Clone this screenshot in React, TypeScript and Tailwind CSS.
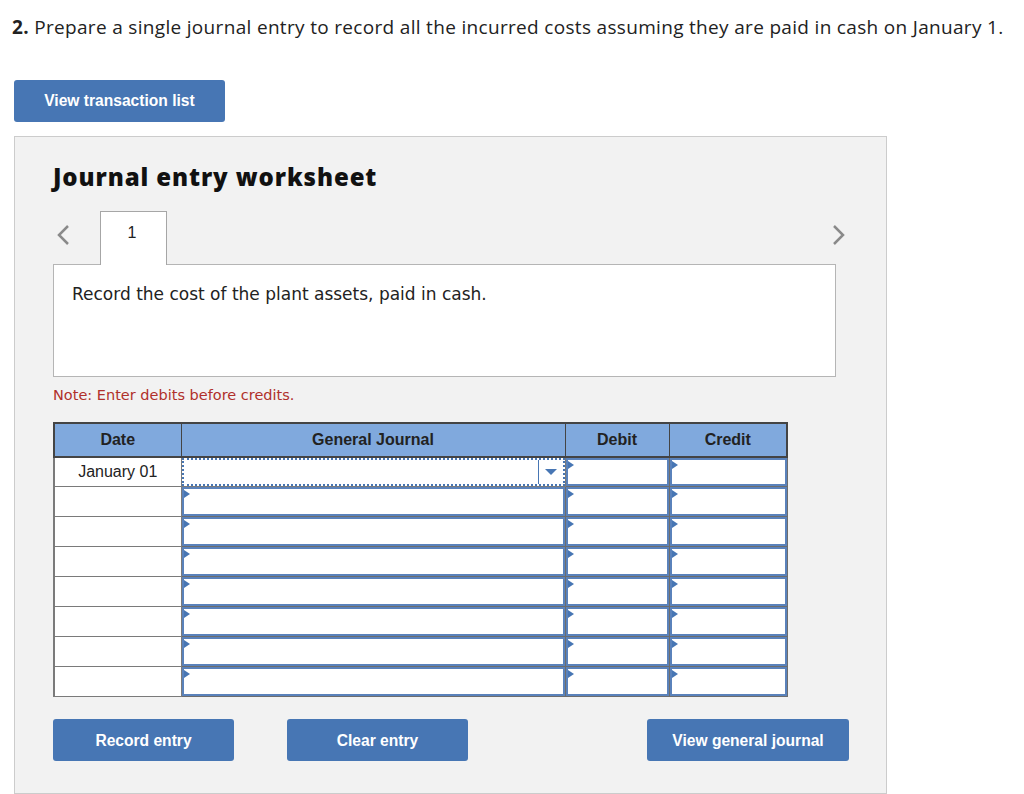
import React from 'react';

const blue = 'bg-[#4776b4]';

function Tri() {
  return (
    <span className="absolute left-0 top-[1px] w-0 h-0 border-y-[4px] border-y-transparent border-l-[6px] border-l-[#4776b4]" />
  );
}

function InputCell({ w }: { w: string }) {
  return (
    <td className={`${w} h-[30px] p-0 border border-[#6d6d6d] bg-white`}>
      <div className="relative h-full border-2 border-[#5a82bb]">
        <Tri />
      </div>
    </td>
  );
}

export default function App() {
  const rows = [0, 1, 2, 3, 4, 5, 6, 7];
  return (
    <div className="w-[1024px] h-[794px] bg-white text-[#222] overflow-hidden">
      <p className="pl-[12px] pt-[14px] text-[19px] leading-[26px] tracking-[0.32px] font-['Open_Sans',sans-serif] text-[#222] whitespace-nowrap">
        <b>2.</b> Prepare a single journal entry to record all the incurred costs assuming they are paid in cash on January 1.
      </p>

      <button
        className={`ml-[14px] mt-[40px] w-[211px] h-[42px] rounded-[3px] ${blue} text-white text-[15.6px] font-bold font-['Liberation_Sans',sans-serif]`}
      >
        View transaction list
      </button>

      <div className="ml-[14px] mt-[14px] w-[873px] h-[658px] bg-[#f2f2f2] border border-[#cccccc] pl-[38px] pr-[50px] pt-[24px]">
        <h2 className="text-[24px] leading-[32px] tracking-[0.9px] font-extrabold font-['Open_Sans',sans-serif] text-[#111]">
          Journal entry worksheet
        </h2>

        <div className="mt-[17px] flex items-end h-[54px] relative">
          <span className="w-[47px] pl-[3px] pb-[18px]">
            <svg width="14" height="22" viewBox="0 0 14 22">
              <path d="M12 2 L3 11 L12 20" fill="none" stroke="#8a8a8a" strokeWidth="2.5" />
            </svg>
          </span>
          <div className="w-[67px] h-[54px] bg-white border border-b-0 border-[#a6a6a6] flex justify-center pt-[9px] pr-[3px] text-[16px] font-['Liberation_Sans',sans-serif] relative z-10 -mb-[1px]">
            1
          </div>
          <span className="ml-auto mr-[-10px] pb-[18px]">
            <svg width="14" height="22" viewBox="0 0 14 22">
              <path d="M2 2 L11 11 L2 20" fill="none" stroke="#8a8a8a" strokeWidth="2.5" />
            </svg>
          </span>
        </div>

        <div className="w-[783px] h-[113px] bg-white border border-[#b5b5b5] pl-[18px] pt-[17px] text-[17px] font-['DejaVu_Sans',sans-serif] text-[#222]">
          Record the cost of the plant assets, paid in cash.
        </div>

        <p className="mt-[8px] text-[14.5px] font-['DejaVu_Sans',sans-serif] text-[#b0302b]">
          Note: Enter debits before credits.
        </p>

        <table className="mt-[15px] border-collapse table-fixed w-[735px] font-['Liberation_Sans',sans-serif]">
          <thead>
            <tr className="h-[34px] bg-[#80a9dd] text-[16px] font-bold text-[#222]">
              <th className="w-[127px] border-2 border-[#444] border-r-[1px]">Date</th>
              <th className="w-[384px] border-2 border-[#444] border-x-[1px]">General Journal</th>
              <th className="w-[104px] border-2 border-[#444] border-x-[1px]">Debit</th>
              <th className="w-[118px] border-2 border-[#444] border-l-[1px]">Credit</th>
            </tr>
          </thead>
          <tbody>
            {rows.map((r) => (
              <tr key={r} className="h-[30px]">
                <td className="w-[127px] h-[30px] p-0 border border-[#7a7a7a] border-l-2 bg-white text-center text-[16px]">
                  {r === 0 ? 'January 01' : ''}
                </td>
                {r === 0 ? (
                  <td className="w-[384px] h-[30px] p-0 border border-[#7a7a7a] bg-white">
                    <div className="relative h-full border-2 border-dotted border-[#4776b4] flex">
                      <div className="flex-1" />
                      <div className="w-[25px] border-l border-[#4776b4] flex items-center justify-center">
                        <span className="w-0 h-0 border-x-[6px] border-x-transparent border-t-[6px] border-t-[#4776b4]" />
                      </div>
                    </div>
                  </td>
                ) : (
                  <InputCell w="w-[384px]" />
                )}
                <InputCell w="w-[104px]" />
                <InputCell w="w-[118px]" />
              </tr>
            ))}
          </tbody>
        </table>

        <div className="mt-[22px] flex font-['Liberation_Sans',sans-serif] text-[15.6px] font-bold text-white">
          <button className={`shrink-0 w-[181px] h-[42px] rounded-[3px] ${blue}`}>Record entry</button>
          <button className={`shrink-0 ml-[53px] w-[181px] h-[42px] rounded-[3px] ${blue}`}>Clear entry</button>
          <button className={`shrink-0 ml-[179px] w-[202px] h-[42px] rounded-[3px] ${blue}`}>View general journal</button>
        </div>
      </div>
    </div>
  );
}
